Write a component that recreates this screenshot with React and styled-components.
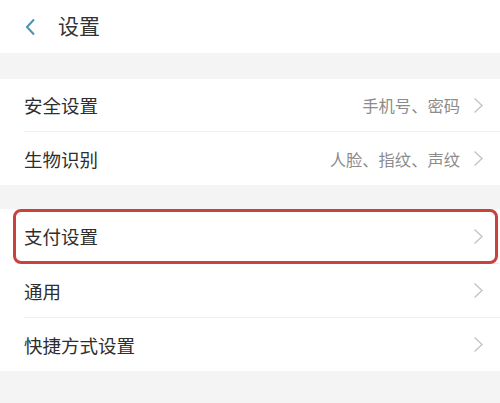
import React from "react";
import styled, { createGlobalStyle } from "styled-components";

const GlobalStyle = createGlobalStyle`
  body {
    margin: 0;
    background: #ffffff;
    font-family: "Noto Sans CJK SC", "Noto Sans", sans-serif;
  }
`;

const Page = styled.div`
  width: 500px;
  height: 403px;
  overflow: hidden;
  background: #f4f4f5;
  display: flex;
  flex-direction: column;
`;

const Header = styled.div`
  height: 53px;
  background: #fff;
  display: flex;
  align-items: center;
  padding-left: 25px;
  gap: 22px;
`;

const Title = styled.div`
  font-size: 21px;
  color: #333;
  line-height: 1;
  margin-top: -2px;
`;

const Gap = styled.div`
  height: ${(p) => p.h}px;
  flex-shrink: 0;
`;

const Group = styled.div`
  background: #fff;
  padding-left: 24px;
`;

const Row = styled.div`
  position: relative;
  height: ${(p) => p.h || 53}px;
  display: flex;
  align-items: center;
  padding-right: 16px;
  border-bottom: ${(p) => (p.last ? "none" : "1px solid #efefef")};
  box-sizing: border-box;
`;

const Label = styled.div`
  flex: 1;
  font-size: 18.5px;
  color: #2e2e2e;
`;

const Value = styled.div`
  font-size: 16.3px;
  color: #8c8c8c;
  margin-right: 13px;
`;

const Highlight = styled.div`
  position: absolute;
  left: -11px;
  right: 2px;
  top: 0;
  bottom: -1px;
  border: 3.5px solid #c8423e;
  border-radius: 8px;
  pointer-events: none;
`;

const Chevron = () => (
  <svg width="11" height="17" viewBox="0 0 11 17">
    <path d="M1.5 1.5 L9 8.5 L1.5 15.5" fill="none" stroke="#c4c4c4" strokeWidth="1.4" />
  </svg>
);

const Back = () => (
  <svg width="11" height="18" viewBox="0 0 11 18">
    <path d="M9 1.5 L2 9 L9 16.5" fill="none" stroke="#4a92b6" strokeWidth="2" />
  </svg>
);

const Item = ({ label, value, last, highlight, h }) => (
  <Row last={last} h={h}>
    {highlight && <Highlight />}
    <Label>{label}</Label>
    {value && <Value>{value}</Value>}
    <Chevron />
  </Row>
);

export default function App() {
  return (
    <>
      <GlobalStyle />
      <Page>
        <Header>
          <Back />
          <Title>设置</Title>
        </Header>
        <Gap h={26} />
        <Group>
          <Item label="安全设置" value="手机号、密码" />
          <Item label="生物识别" value="人脸、指纹、声纹" last />
        </Group>
        <Gap h={24} />
        <Group>
          <Item label="支付设置" highlight h={55} />
          <Item label="通用" h={54} />
          <Item label="快捷方式设置" last h={53} />
        </Group>
      </Page>
    </>
  );
}
